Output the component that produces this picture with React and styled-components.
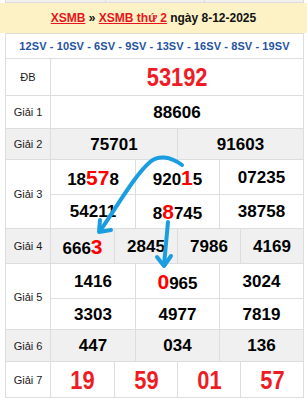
import React from "react";
import styled, { createGlobalStyle } from "styled-components";

const GlobalStyle = createGlobalStyle`
  html, body { margin: 0; padding: 0; background: #fff; }
  body { font-family: "Liberation Sans", Arial, sans-serif; }
`;

const Page = styled.div`
  position: relative;
  width: 307px;
  height: 399px;
  overflow: hidden;
`;

const Sliver = styled.div`
  margin-left: 5px;
  width: 299px;
  box-sizing: border-box;
  height: 3px;
  background: #f0f0f0;
  border-left: 1px solid #ddd;
  border-right: 1px solid #ddd;
  border-bottom: 1px solid #ddd;
  display: grid;
  grid-template-columns: repeat(3, 1fr);
`;

const SliverCell = styled.div`
  border-left: ${(p) => (p.$first ? "none" : "1px solid #ddd")};
`;

const Header = styled.div`
  height: 30px;
  background: #fdf2c6;
  display: flex;
  align-items: center;
  justify-content: center;
  font-weight: bold;
  font-size: 12px;
  color: #111;
  white-space: pre;
`;

const Link = styled.a`
  color: #e8141c;
  text-decoration: underline;
`;

const Board = styled.div`
  margin-left: 5px;
  width: 299px;
  box-sizing: border-box;
  border-left: 1px solid #ddd;
  border-right: 1px solid #ddd;
`;

const SvRow = styled.div`
  height: 24px;
  border-top: 1px solid #ddd;
  border-bottom: 1px solid #ddd;
  display: flex;
  align-items: center;
  justify-content: center;
  color: #25539f;
  font-weight: bold;
  font-size: 11px;
  letter-spacing: 0.1px;
  white-space: pre;
`;

const Row = styled.div`
  display: grid;
  grid-template-columns: 45px 1fr;
  border-bottom: 1px solid #ddd;
  background: ${(p) => (p.$alt ? "#f0f0f0" : "#fff")};
`;

const Label = styled.div`
  display: flex;
  align-items: center;
  justify-content: center;
  border-right: 1px solid #ddd;
  font-size: 11px;
  color: #1a1a1a;
`;

const Cells = styled.div`
  display: grid;
  grid-template-columns: repeat(${(p) => p.$cols}, 1fr);
`;

const Cell = styled.div`
  height: ${(p) => p.$h}px;
  display: flex;
  align-items: center;
  justify-content: center;
  border-left: ${(p) => (p.$col > 0 ? "1px solid #ddd" : "none")};
  border-top: ${(p) => (p.$row > 0 ? "1px solid #ddd" : "none")};
`;

const Num = styled.span`
  font-weight: bold;
  font-size: 17px;
  color: #000;
  line-height: 1;
`;

const BigRed = styled.span`
  display: inline-block;
  font-weight: bold;
  font-size: 26px;
  color: #ee1c25;
  line-height: 1;
  transform: scaleX(0.84);
`;

const Hi = styled.span`
  color: #ff0000;
  font-size: 21px;
`;

const Overlay = styled.svg`
  position: absolute;
  left: 0;
  top: 0;
  pointer-events: none;
`;

const renderNum = (v) =>
  Array.isArray(v)
    ? v.map((part, i) =>
        typeof part === "string" ? (
          <React.Fragment key={i}>{part}</React.Fragment>
        ) : (
          <Hi key={i}>{part.h}</Hi>
        )
      )
    : v;

const rows = [
  { label: "ĐB", h: [36], cols: 1, big: true, values: ["53192"] },
  { label: "Giải 1", h: [32], cols: 1, values: ["88606"] },
  { label: "Giải 2", h: [30], cols: 2, alt: true, values: ["75701", "91603"] },
  {
    label: "Giải 3",
    h: [34, 33],
    cols: 3,
    values: [
      ["18", { h: "57" }, "8"],
      ["920", { h: "1" }, "5"],
      "07235",
      "54211",
      ["8", { h: "8" }, "745"],
      "38758",
    ],
  },
  {
    label: "Giải 4",
    h: [34],
    cols: 4,
    alt: true,
    values: [["666", { h: "3" }], "2845", "7986", "4169"],
  },
  {
    label: "Giải 5",
    h: [34, 30],
    cols: 3,
    values: ["1416", [{ h: "0" }, "965"], "3024", "3303", "4977", "7819"],
  },
  { label: "Giải 6", h: [31], cols: 3, alt: true, values: ["447", "034", "136"] },
  { label: "Giải 7", h: [35], cols: 4, big: true, values: ["19", "59", "01", "57"] },
];

export default function App() {
  return (
    <Page>
      <GlobalStyle />
      <Sliver>
        <SliverCell $first />
        <SliverCell />
        <SliverCell />
      </Sliver>
      <Header>
        <Link>XSMB</Link>
        {" » "}
        <Link>XSMB thứ 2</Link>
        {" ngày 8-12-2025"}
      </Header>
      <Board>
        <SvRow>12SV - 10SV - 6SV - 9SV - 13SV - 16SV - 8SV - 19SV</SvRow>
        {rows.map((r) => (
          <Row key={r.label} $alt={r.alt}>
            <Label>{r.label}</Label>
            <Cells $cols={r.cols}>
              {r.values.map((v, i) => {
                const row = Math.floor(i / r.cols);
                const col = i % r.cols;
                return (
                  <Cell key={i} $h={r.h[row]} $row={row} $col={col}>
                    {r.big ? <BigRed>{v}</BigRed> : <Num>{renderNum(v)}</Num>}
                  </Cell>
                );
              })}
            </Cells>
          </Row>
        ))}
      </Board>
      <Overlay width="307" height="399" viewBox="0 0 307 399">
        <g
          fill="none"
          stroke="#1a9ee0"
          strokeWidth="4"
          strokeLinecap="round"
          strokeLinejoin="round"
        >
          <path d="M182,165 C170,156 158,155 150,162 C135,175 118,205 100,231" />
          <path d="M100,220 L99,232 L111,230" />
          <path d="M168,222 L164,265" />
          <path d="M157,257 L164,266 L171,256" />
        </g>
      </Overlay>
    </Page>
  );
}
